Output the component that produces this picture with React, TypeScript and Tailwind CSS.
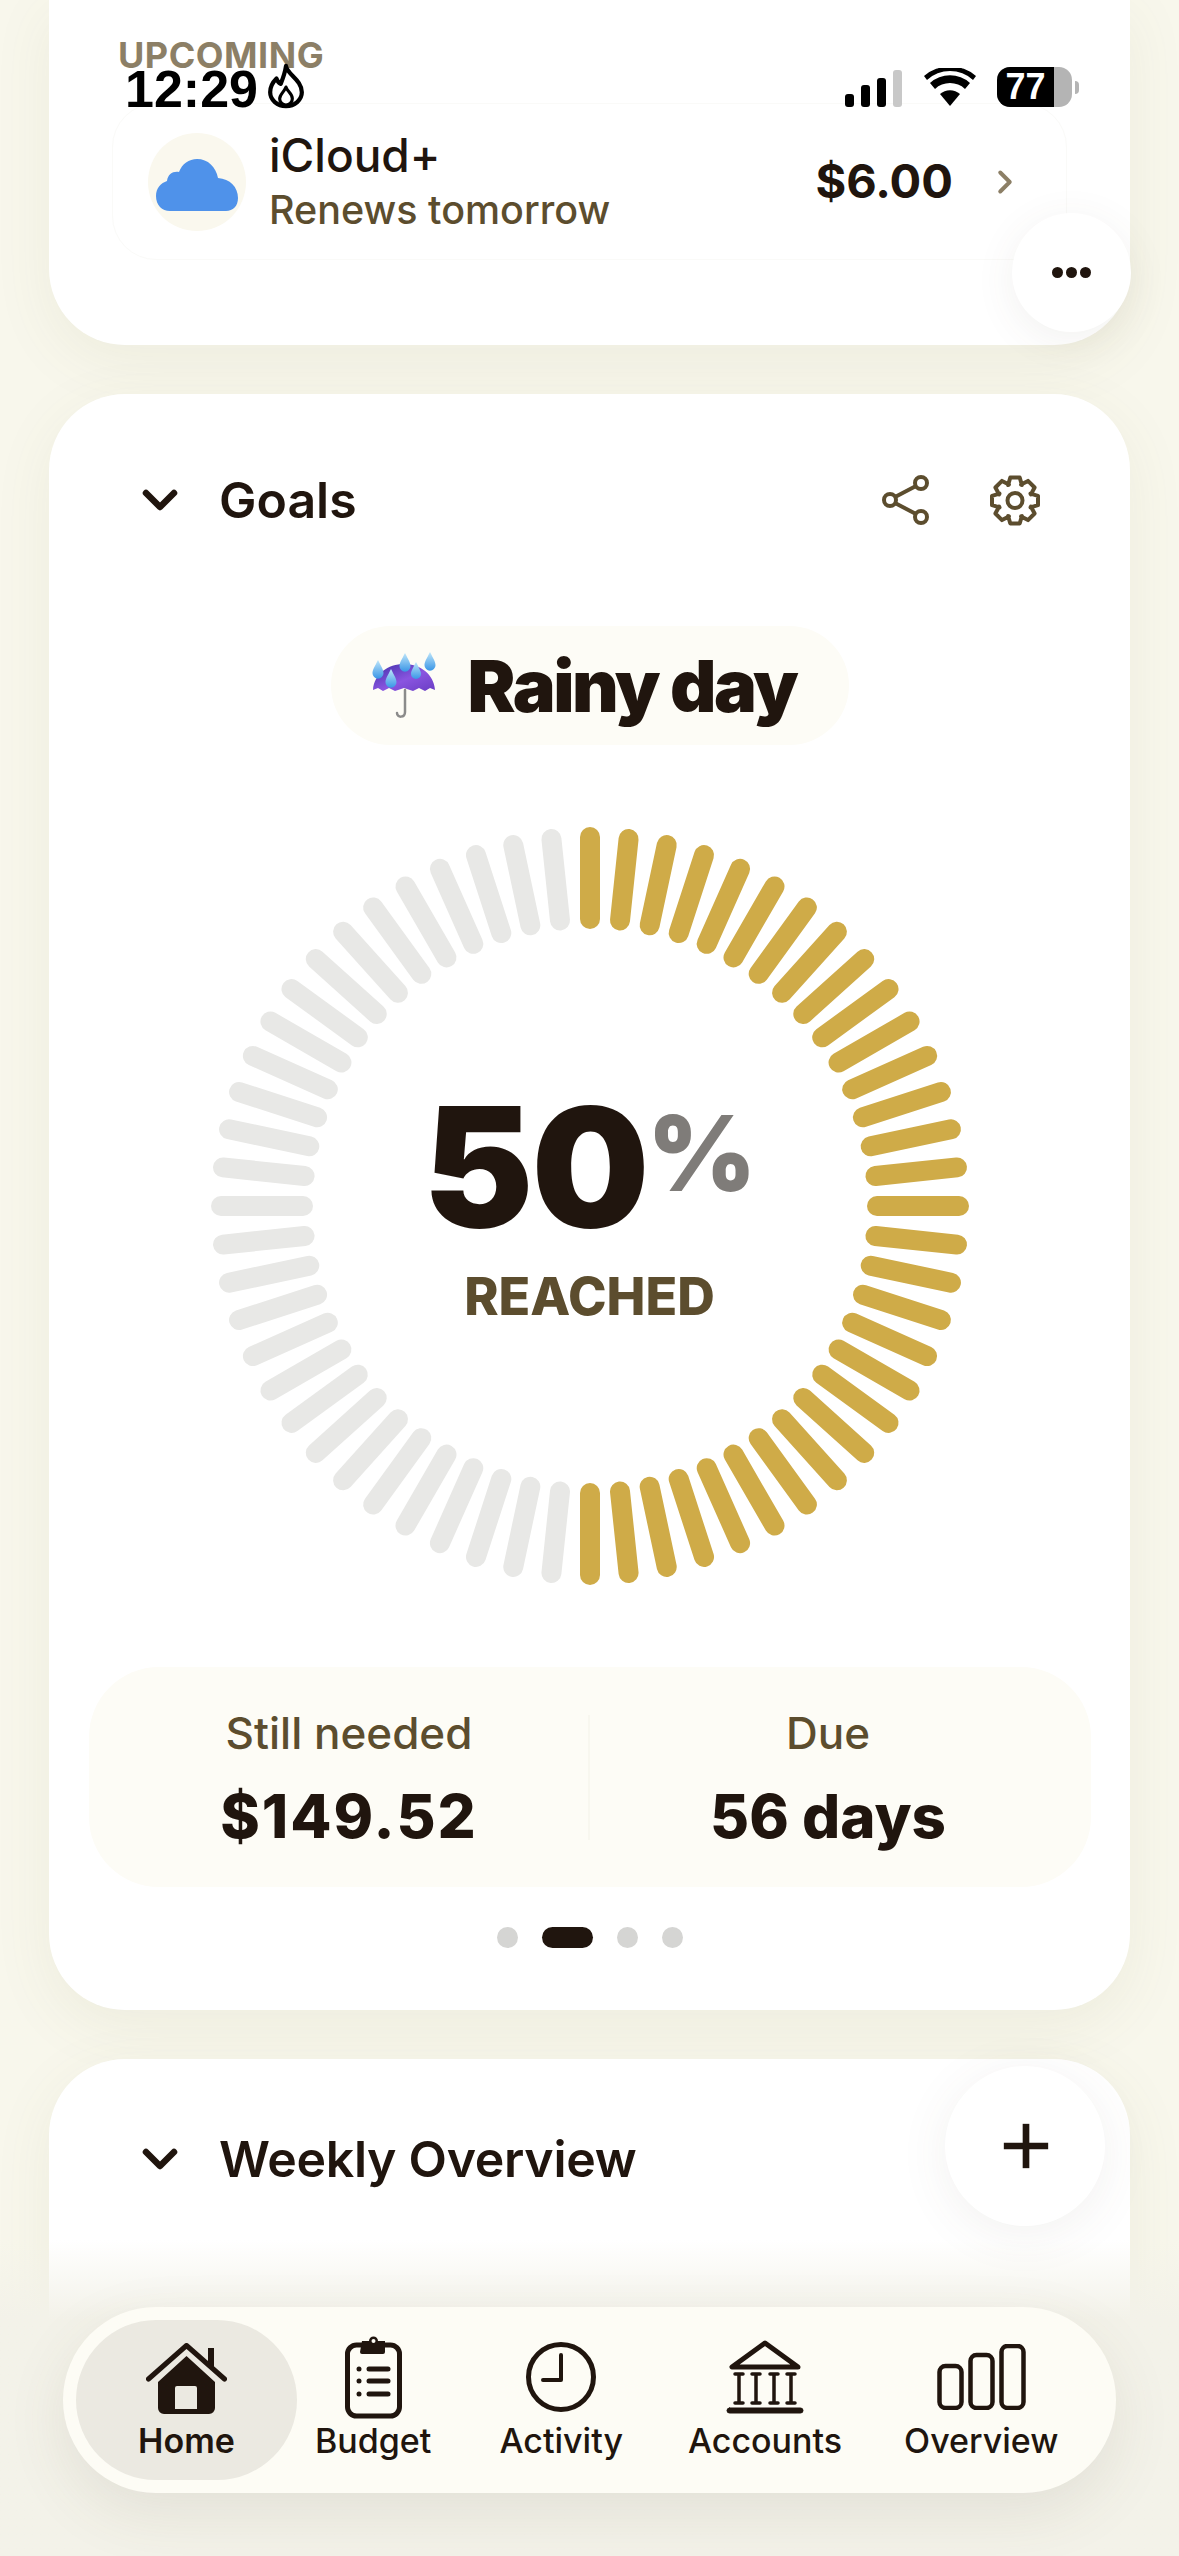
import React from 'react';
import { ChevronDown, ChevronRight, Plus } from 'lucide-react';

const FONT = "font-['Inter','Noto_Sans',sans-serif]";

function Gauge() {
  const bars = Array.from({ length: 60 }, (_, i) => i);
  return (
    <svg width="758" height="758" viewBox="-379 -379 758 758">
      {bars.map((i) => (
        <line
          key={i}
          x1="0"
          y1="-369"
          x2="0"
          y2="-287"
          stroke={i <= 30 ? '#cfab48' : '#e8e8e6'}
          strokeWidth="20"
          strokeLinecap="round"
          transform={`rotate(${i * 6})`}
        />
      ))}
    </svg>
  );
}

// eight square-ish cog teeth
function gearPath() {
  const pts: string[] = [];
  for (let i = 0; i < 8; i++) {
    const a = (i * Math.PI) / 4 - Math.PI / 2;
    const spread = [
      [17, -0.42],
      [23.500, -0.2],
      [23.500, 0.2],
      [17, 0.42],
    ];
    spread.forEach(([r, d]) => {
      pts.push(`${(25 + r * Math.cos(a + d)).toFixed(1)} ${(25.500 + r * Math.sin(a + d)).toFixed(1)}`);
    });
  }
  return `M${pts.join('L')}Z`;
}

function Gear() {
  return (
    <svg className="ml-[60px]" width="50" height="51" viewBox="0 0 50 51" fill="none" stroke="#5c4d2e" strokeWidth="4" strokeLinejoin="round">
      <path d={gearPath()} />
      <circle cx="25" cy="25.500" r="7.500" />
    </svg>
  );
}

function Umbrella() {
  return (
    <svg width="64" height="68" viewBox="0 0 64 68">
      <defs>
        <linearGradient id="dome" x1="0" y1="0" x2="1" y2="1">
          <stop offset="0" stopColor="#3f2fa8" />
          <stop offset="0.55" stopColor="#8a55e0" />
          <stop offset="1" stopColor="#6a3dc4" />
        </linearGradient>
        <linearGradient id="drop" x1="0" y1="0" x2="0" y2="1">
          <stop offset="0" stopColor="#bfe6fa" />
          <stop offset="1" stopColor="#3a96e6" />
        </linearGradient>
      </defs>
      <path d="M33 38V60C33 66 25 66 25 61" fill="none" stroke="#8b8b8b" strokeWidth="2.5" strokeLinecap="round" />
      <path d="M1 38C2 22 16 12 32 12S62 22 63 38L58 36 53 39 47 36 41 39 32 36 23 39 17 36 11 39 6 36Z" fill="url(#dome)" />
      {[
        [6, 8, 1.1],
        [33, 1, 1.1],
        [58, 0, 1.1],
        [44, 10, 1],
        [19, 17, 1.1],
      ].map(([x, y, s], i) => (
        <path
          key={i}
          d={`M${x} ${y}c${3 * s} ${6 * s} ${5 * s} ${9 * s} ${5 * s} ${12 * s}a${5 * s} ${5 * s} 0 0 1 ${-10 * s} 0c0 ${-3 * s} ${2 * s} ${-6 * s} ${5 * s} ${-12 * s}z`}
          fill="url(#drop)"
        />
      ))}
    </svg>
  );
}

function NavHome() {
  return (
    <svg width="81" height="72" viewBox="0 0 81 72">
      <path d="M2.5 36L40.5 2.5 78.500 36" fill="none" stroke="#20150e" strokeWidth="5" strokeLinecap="round" strokeLinejoin="round" />
      <path d="M62 5h6v20l-6-5z" fill="#20150e" />
      <path fillRule="evenodd" d="M40.5 13L69 39V65a6 6 0 0 1-6 6H18a6 6 0 0 1-6-6V39ZM31 43a2 2 0 0 0-2 2V71H51V45a2 2 0 0 0-2-2Z" fill="#20150e" />
      <rect x="29" y="66" width="22" height="5" fill="#20150e" />
    </svg>
  );
}

function NavBudget() {
  return (
    <svg width="57" height="84" viewBox="0 0 57 84" fill="none" stroke="#20150e" strokeLinecap="round">
      <rect x="2.5" y="10" width="52" height="71" rx="9" strokeWidth="5" />
      <path d="M17 5h7a4.500 4.500 0 0 1 9 0h7v11a2 2 0 0 1-2 2H17a2 2 0 0 1-2-2z" fill="#20150e" stroke="none" transform="translate(0 1)" />
      <circle cx="28.500" cy="6" r="2" fill="#fdfcf5" stroke="none" />
      {[34, 46, 59].map((y) => (
        <g key={y}>
          <circle cx="14" cy={y} r="2.500" fill="#20150e" stroke="none" />
          <path d="M24 34H43" transform={`translate(0 ${y - 34})`} strokeWidth="5" />
        </g>
      ))}
    </svg>
  );
}

function NavActivity() {
  return (
    <svg width="70" height="70" viewBox="0 0 70 70" fill="none" stroke="#20150e" strokeWidth="5" strokeLinecap="round" strokeLinejoin="round">
      <circle cx="35" cy="35" r="32.500" />
      <path d="M35 13V38H17" strokeWidth="4" />
    </svg>
  );
}

function NavAccounts() {
  return (
    <svg width="78" height="74" viewBox="0 0 78 74" fill="none" stroke="#20150e" strokeLinecap="round" strokeLinejoin="round">
      <path d="M39 3L6 27H72Z" strokeWidth="5" />
      {[13, 30, 48, 65].map((x) => (
        <path key={x} d={`M${x - 4} 34H${x + 4}M${x} 34V63M${x - 4} 63H${x + 4}`} strokeWidth="3.500" />
      ))}
      <rect x="1" y="68" width="76" height="5" rx="2.500" fill="#20150e" strokeWidth="1" />
    </svg>
  );
}

function NavOverview() {
  return (
    <svg width="89" height="66" viewBox="0 0 89 66" fill="none" stroke="#20150e" strokeWidth="4.500">
      <rect x="2.500" y="22" width="22" height="42" rx="6" />
      <rect x="33.500" y="11" width="22" height="53" rx="6" />
      <rect x="64.500" y="2" width="22" height="62" rx="6" />
    </svg>
  );
}

const navItems = [
  { label: 'Budget', icon: <NavBudget />, offset: '' },
  { label: 'Activity', icon: <NavActivity />, offset: 'ml-[68px]' },
  { label: 'Accounts', icon: <NavAccounts />, offset: 'ml-[65px]' },
  { label: 'Overview', icon: <NavOverview />, offset: 'ml-[62px]' },
];

function StatusBar() {
  return (
    <div className="absolute left-0 top-0 w-full">
      <div className="absolute left-[118px] top-[35px] text-[36px] tracking-[0.5px] leading-[40px] font-bold text-[#8c7f66]">UPCOMING</div>
      <div className="absolute left-[125px] top-[62px] flex items-center gap-[9px]">
        <span className="text-[52px] leading-[54px] font-bold text-black font-['Liberation_Sans',sans-serif]">12:29</span>
        <svg className="-translate-y-[3px]" width="38" height="46" viewBox="0 0 36 42" fill="none" stroke="#000" strokeWidth="4" strokeLinejoin="round">
          <path d="M18 2c1 8 15 13 15 25a15 13 0 0 1-30 0c0-6 3-10 6-13 1 3 2 4 4 5 2-5 4-10 5-17z" />
          <path d="M18 22c1 4 6 6 6 11a6 6 0 0 1-12 0c0-4 4-6 6-11z" strokeWidth="3" />
        </svg>
      </div>
      <div className="absolute left-[845px] top-[67px] flex items-center">
        <div className="flex items-end gap-[7px] h-[40px]">
          <div className="w-[9px] h-[13px] rounded-[3px] bg-black" />
          <div className="w-[9px] h-[22px] rounded-[3px] bg-black" />
          <div className="w-[9px] h-[29px] rounded-[3px] bg-black" />
          <div className="w-[9px] h-[37px] rounded-[3px] bg-[#c8c8c8]" />
        </div>
        <svg className="ml-[22px]" width="52" height="38" viewBox="0 0 52 38">
          <path d="M26 38L16 26a15 15 0 0 1 20 0z" />
          <path d="M11 21a22 22 0 0 1 30 0l5-6a30 30 0 0 0-40 0z" />
          <path d="M3 12a34 34 0 0 1 46 0l3-4a40 40 0 0 0-52 0z" />
        </svg>
        <div className="ml-[21px] w-[75px] h-[40px] rounded-[13px] bg-[#b4b4b4] overflow-hidden">
          <div className="w-[57px] h-full bg-black flex items-center justify-center text-white text-[36px] font-bold leading-none font-['Liberation_Sans',sans-serif]">77</div>
        </div>
        <div className="ml-[3px] w-[4px] h-[13px] rounded-r-full bg-[#b4b4b4]" />
      </div>
    </div>
  );
}

export default function App() {
  return (
    <div className={`relative w-[1179px] h-[2556px] overflow-hidden bg-[#f8f7ec] ${FONT} text-[#20150e]`}>
      <div className="flex flex-col gap-[49px] px-[49px]">
        {/* Upcoming */}
        <section className="h-[345px] rounded-b-[76px] bg-white shadow-[0_16px_60px_rgba(120,110,70,0.08)] pt-[103px] px-[63px]">
          <div className="flex items-center h-[157px] rounded-[44px] border border-[#fafaf8] pl-[35px] pr-[42px]">
            <div className="w-[98px] h-[98px] rounded-full bg-[#faf8ee] flex items-center justify-center">
              <svg width="82" height="52" viewBox="0 0 82 52" className="mt-[6px]">
                <path d="M14 52C6 52 0 46 0 37c0-8 5-13 11-15 1-7 6-10 12-9 3-8 10-13 18-13 11 0 19 8 21 19 12 1 20 9 20 20 0 8-5 13-12 13Z" fill="#4f92ea" />
              </svg>
            </div>
            <div className="ml-[23px] flex flex-col">
              <span className="text-[46px] leading-[54px] font-medium">iCloud+</span>
              <span className="mt-[3px] text-[39.500px] leading-[50px] font-medium text-[#5c4d2e]">Renews tomorrow</span>
            </div>
            <span className="ml-auto text-[47px] font-bold">$6.00</span>
            <ChevronRight className="ml-[33px] text-[#8c7f66]" size={38} strokeWidth={2.5} />
          </div>
        </section>

        {/* Goals */}
        <section className="h-[1616px] rounded-[76px] bg-white shadow-[0_16px_60px_rgba(120,110,70,0.08)] flex flex-col items-center">
          <div className="w-full flex items-center h-[212px] pl-[83px] pr-[90px]">
            <ChevronDown size={56} strokeWidth={2.8} className="text-[#20150e]" />
            <h2 className="ml-[31px] text-[50px] font-semibold">Goals</h2>
            <svg className="ml-auto" width="48" height="50" viewBox="0 0 48 50" fill="none" stroke="#5c4d2e" strokeWidth="4">
              <circle cx="39" cy="8" r="6" />
              <circle cx="8" cy="25" r="6" />
              <circle cx="39" cy="42" r="6" />
              <path d="M13 22L34 11M13 28L34 39" />
            </svg>
            <Gear />
          </div>
          <div className="mt-[20px] h-[119px] w-[518px] rounded-full bg-[#fdfcf6] flex items-center pl-[41px] gap-[32px]">
            <Umbrella />
            <span className="text-[72px] font-black tracking-[-2.500px] leading-none">Rainy day</span>
          </div>
          <div className="relative mt-[82px] h-[758px] w-[758px]">
            <Gauge />
            <div className="absolute inset-0 flex flex-col items-center justify-center">
              <div className="flex items-start">
                <span className="text-[166px] font-black leading-[160px] tracking-[-2px]">50</span>
                <span className="mt-[6px] text-[104px] leading-[120px] font-black text-[#7f7c79]">%</span>
              </div>
              <span className="mt-[22px] text-[52px] leading-[56px] font-extrabold text-[#5c4d2e]">REACHED</span>
            </div>
          </div>
          <div className="mt-[82px] w-[1002px] h-[220px] rounded-[70px] bg-[#fdfcf6] flex items-center">
            <div className="flex-1 flex flex-col items-center gap-[26px] pl-[22px] translate-y-[1px]">
              <span className="text-[44px] leading-[50px] font-medium text-[#5c4d2e]">Still needed</span>
              <span className="text-[60px] leading-[64px] font-extrabold tracking-[2px]">$149.52</span>
            </div>
            <div className="w-[2px] h-[125px] bg-[#f8f7ef]" />
            <div className="flex-1 flex flex-col items-center gap-[26px] pr-[24px] translate-y-[1px]">
              <span className="text-[44px] leading-[50px] font-medium text-[#5c4d2e]">Due</span>
              <span className="text-[60px] leading-[64px] font-extrabold">56 days</span>
            </div>
          </div>
          <div className="mt-[40px] flex items-center gap-[24px]">
            <div className="w-[21px] h-[21px] rounded-full bg-[#d5d5d3]" />
            <div className="w-[51px] h-[21px] rounded-full bg-[#20150e]" />
            <div className="w-[21px] h-[21px] rounded-full bg-[#d5d5d3]" />
            <div className="w-[21px] h-[21px] rounded-full bg-[#d5d5d3]" />
          </div>
        </section>

        {/* Weekly overview */}
        <section className="h-[500px] rounded-t-[76px] bg-white shadow-[0_16px_60px_rgba(120,110,70,0.08)]">
          <div className="flex items-center h-[200px] pl-[83px]">
            <ChevronDown size={56} strokeWidth={2.8} />
            <h2 className="ml-[31px] text-[50px] font-semibold tracking-[-0.300px]">Weekly Overview</h2>
          </div>
        </section>
      </div>

      <div className="absolute left-0 bottom-0 w-full h-[316px] bg-gradient-to-b from-transparent via-[#f3f2e9] via-25% to-[#f3f2e9]" />

      {/* floating buttons */}
      <button className="absolute left-[1012px] top-[213px] w-[119px] h-[119px] rounded-full bg-white shadow-[0_8px_40px_rgba(90,80,60,0.08)] flex items-center justify-center gap-[3px]">
        <span className="w-[11px] h-[11px] rounded-full bg-[#20150e]" />
        <span className="w-[11px] h-[11px] rounded-full bg-[#20150e]" />
        <span className="w-[11px] h-[11px] rounded-full bg-[#20150e]" />
      </button>
      <button className="absolute left-[945px] top-[2066px] w-[160px] h-[160px] rounded-full bg-white shadow-[0_8px_50px_rgba(90,80,60,0.08)] flex items-center justify-center">
        <Plus size={76} strokeWidth={2.1} strokeLinecap="butt" className="translate-x-[1px]" />
      </button>

      {/* tab bar */}
      <nav className="absolute left-[63px] top-[2307px] w-[1053px] h-[186px] rounded-[93px] bg-[#fdfcf5] shadow-[0_20px_60px_rgba(90,80,60,0.1)] flex items-center pl-[13px]">
        <div className="w-[221px] h-[160px] rounded-[80px] bg-[#ebe9e1] flex flex-col items-center pt-[23px]">
          <div className="h-[72px]"><NavHome /></div>
          <span className="mt-[6px] text-[34px] leading-[40px] font-semibold">Home</span>
        </div>
        <div className="ml-[18px] flex -translate-y-[1px]">
          {navItems.map((item) => (
            <div key={item.label} className={`flex flex-col items-center ${item.offset}`}>
              <div className="h-[83px] flex items-center -translate-y-[2px]">{item.icon}</div>
              <span className="text-[34px] leading-[40px] font-medium">{item.label}</span>
            </div>
          ))}
        </div>
      </nav>

      <StatusBar />
    </div>
  );
}
